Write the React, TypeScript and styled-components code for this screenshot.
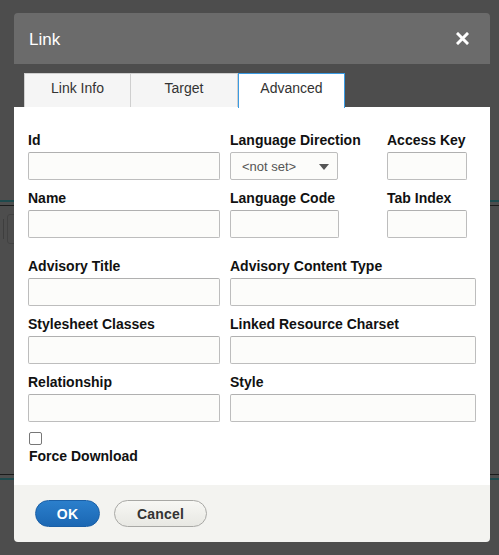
import React from 'react';
import styled, { createGlobalStyle } from 'styled-components';

const GlobalStyle = createGlobalStyle`
  html, body {
    margin: 0;
    padding: 0;
    background: #4d4d4d;
    font-family: 'Liberation Sans', Arial, sans-serif;
  }
  * { box-sizing: border-box; }
`;

const Page = styled.div`
  position: relative;
  width: 499px;
  height: 555px;
  overflow: hidden;
  background: #4d4d4d;
`;

// the dimmed editor that sits behind the dialog
const Behind = styled.div`
  position: absolute;
  inset: 0;
  display: flex;
  flex-direction: column;
  padding-top: 200px;
`;

const Rule = styled.div<{ color: string; h: number; mt?: number }>`
  height: ${p => p.h}px;
  margin-top: ${p => p.mt || 0}px;
  background: ${p => p.color};
`;

const FakeToolbar = styled.div`
  display: flex;
  gap: 3px;
  margin-top: 7px;
  padding-left: 3px;
  height: 31px;
  align-items: center;
`;

const FakeDivider = styled.div`
  width: 1px;
  height: 20px;
  background: #3e3e3e;
`;

const FakeButton = styled.div`
  width: 40px;
  height: 30px;
  border: 1px solid #424242;
  border-radius: 3px;
`;

const Dialog = styled.div`
  position: absolute;
  left: 14px;
  top: 13px;
  width: 476px;
  display: flex;
  flex-direction: column;
`;

const Header = styled.div`
  height: 51px;
  background: #6b6b6b;
  border-radius: 4px 4px 0 0;
  display: flex;
  align-items: center;
  justify-content: space-between;
  padding: 0 21px 0 15px;
`;

const Title = styled.h1`
  margin: 0;
  font-size: 17px;
  font-weight: 400;
  color: #ffffff;
  padding-top: 2px;
`;

const CloseButton = styled.button`
  width: 14px;
  height: 14px;
  padding: 0;
  border: none;
  background: transparent;
  display: flex;
  align-items: center;
  justify-content: center;
  cursor: pointer;
`;

const TabStrip = styled.div`
  display: flex;
  padding: 9px 0 0 10px;
  height: 43px;
`;

const Tab = styled.div<{ active?: boolean }>`
  width: 107px;
  height: ${p => (p.active ? 35 : 34)}px;
  display: flex;
  align-items: center;
  justify-content: center;
  font-size: 14px;
  color: #333;
  background: ${p => (p.active ? '#ffffff' : '#f5f5f5')};
  border: 1px solid ${p => (p.active ? '#3a9be3' : '#cfcfcf')};
  border-bottom: none;
  border-left-width: ${p => (p.active ? 1 : 0)}px;
  padding-bottom: ${p => (p.active ? 7 : 6)}px;
  z-index: ${p => (p.active ? 1 : 0)};
  &:first-child {
    border-left-width: 1px;
  }
`;

const Body = styled.div`
  background: #ffffff;
  padding: 25px 14px 17px 14px;
  display: flex;
  flex-direction: column;
`;

const TopGrid = styled.div`
  display: grid;
  grid-template-columns: 192px 108px 80px;
  column-gap: 10px;
  row-gap: 10px;
`;

const WideGrid = styled.div`
  display: grid;
  grid-template-columns: 192px 1fr;
  column-gap: 10px;
  row-gap: 10px;
  margin-top: 20px;
`;

const Field = styled.div<{ shift?: number }>`
  display: flex;
  flex-direction: column;
  margin-left: ${p => p.shift || 0}px;
`;

const Label = styled.label`
  font-size: 14px;
  font-weight: 700;
  line-height: 17px;
  color: #111;
  white-space: nowrap;
  margin-bottom: 3px;
`;

const TextInput = styled.input<{ w?: number }>`
  height: 28px;
  width: ${p => (p.w ? `${p.w}px` : '100%')};
  border: 1px solid #bdbdbd;
  border-top-color: #b0b0b0;
  border-radius: 2px;
  background: #fcfcfa;
  font-family: inherit;
  font-size: 14px;
  padding: 0 8px;
  outline: none;
`;

const SelectBox = styled.div`
  height: 28px;
  width: 108px;
  border: 1px solid #bdbdbd;
  border-radius: 2px;
  background: #fcfcfa;
  display: flex;
  align-items: center;
  justify-content: space-between;
  padding: 0 8px 0 11px;
  font-size: 13px;
  color: #555;
`;

const Arrow = styled.span`
  width: 0;
  height: 0;
  border-left: 5px solid transparent;
  border-right: 5px solid transparent;
  border-top: 6px solid #555;
  margin-top: 1px;
`;

const CheckRow = styled.div`
  display: flex;
  flex-direction: column;
  margin-top: 10px;
  padding-left: 1px;
`;

const CheckBox = styled.span`
  width: 13px;
  height: 13px;
  border: 1px solid #777;
  border-radius: 2px;
  background: #fff;
  margin-bottom: 3px;
`;

const Footer = styled.div`
  background: #f3f3f0;
  height: 57px;
  border-radius: 0 0 4px 4px;
  display: flex;
  align-items: flex-start;
  gap: 14px;
  padding: 15px 0 0 21px;
`;

const Button = styled.button<{ primary?: boolean }>`
  height: 27px;
  width: ${p => (p.primary ? 65 : 93)}px;
  border-radius: 14px;
  font-family: inherit;
  font-size: 14px;
  font-weight: 700;
  letter-spacing: 0.2px;
  cursor: pointer;
  color: ${p => (p.primary ? '#ffffff' : '#333333')};
  background: ${p =>
    p.primary
      ? 'linear-gradient(#2b7fcc, #1b67b3)'
      : 'linear-gradient(#f7f7f4, #e8e8e3)'};
  border: 1px solid ${p => (p.primary ? '#1a5fa6' : '#a8a8a5')};
  padding: 0;
`;

const topFields = [
  { label: 'Id', kind: 'input' },
  { label: 'Language Direction', kind: 'select' },
  { label: 'Access Key', kind: 'input' },
  { label: 'Name', kind: 'input' },
  { label: 'Language Code', kind: 'input' },
  { label: 'Tab Index', kind: 'input' },
];

const wideFields = [
  'Advisory Title',
  'Advisory Content Type',
  'Stylesheet Classes',
  'Linked Resource Charset',
  'Relationship',
  'Style',
];

const App: React.FC = () => {
  return (
    <>
      <GlobalStyle />
      <Page>
        <Behind>
          <Rule color="#1e4a4d" h={2} />
          <Rule color="#1c1c1c" h={1} mt={3} />
          <FakeToolbar>
            <FakeDivider />
            <FakeButton />
          </FakeToolbar>
          <Rule color="#1c1c1c" h={1} mt={230} />
          <Rule color="#1e4a4d" h={2} mt={3} />
        </Behind>

        <Dialog>
          <Header>
            <Title>Link</Title>
            <CloseButton aria-label="Close">
              <svg width="13" height="13" viewBox="0 0 13 13">
                <path d="M2 2 L11 11 M11 2 L2 11" stroke="#fff" strokeWidth="3" strokeLinecap="square" />
              </svg>
            </CloseButton>
          </Header>

          <TabStrip>
            <Tab>Link Info</Tab>
            <Tab>Target</Tab>
            <Tab active>Advanced</Tab>
          </TabStrip>

          <Body>
            <TopGrid>
              {topFields.map((f, i) => (
                <Field key={f.label} shift={i % 3 === 2 ? 39 : 0}>
                  <Label>{f.label}</Label>
                  {f.kind === 'select' ? (
                    <SelectBox>
                      &lt;not set&gt;
                      <Arrow />
                    </SelectBox>
                  ) : (
                    <TextInput w={i % 3 === 1 ? 109 : i % 3 === 2 ? 80 : undefined} />
                  )}
                </Field>
              ))}
            </TopGrid>

            <WideGrid>
              {wideFields.map(label => (
                <Field key={label}>
                  <Label>{label}</Label>
                  <TextInput />
                </Field>
              ))}
            </WideGrid>

            <CheckRow>
              <CheckBox />
              <Label>Force Download</Label>
            </CheckRow>
          </Body>

          <Footer>
            <Button primary>OK</Button>
            <Button>Cancel</Button>
          </Footer>
        </Dialog>
      </Page>
    </>
  );
};

export default App;
